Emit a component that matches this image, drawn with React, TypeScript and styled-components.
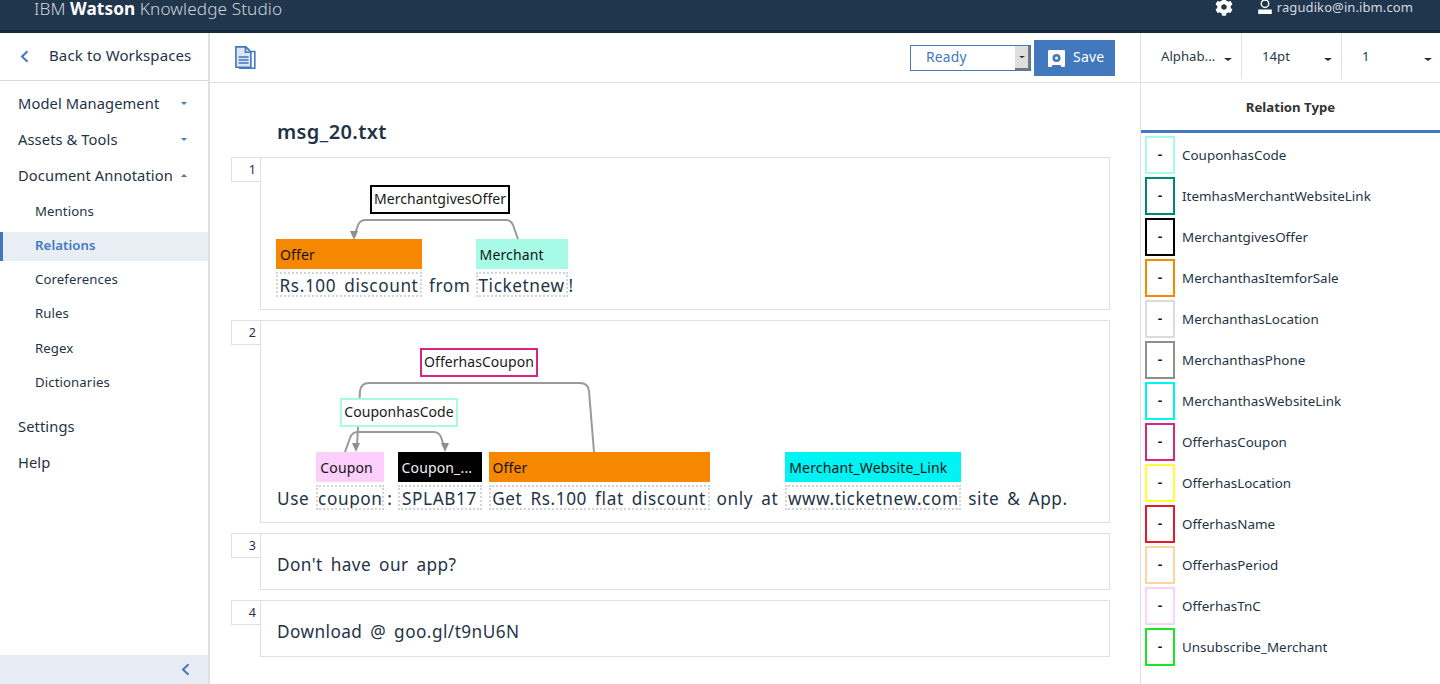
import React from "react";
import styled, { createGlobalStyle } from "styled-components";
import { FaCog } from "react-icons/fa";

const FONT = `"Noto Sans", "Open Sans", sans-serif`;
const INK = "#1f3346";
const LINE = "#e0e0e0";
const BLUE = "#4178be";

const Global = createGlobalStyle`
  html, body { margin: 0; padding: 0; height: 684px; overflow: hidden; background: #fff; }
  body { font-family: ${FONT}; color: ${INK}; }
  * { box-sizing: border-box; }
`;

const Page = styled.div`width: 1440px; height: 684px; display: flex; flex-direction: column; overflow: hidden;`;
const Header = styled.header`
  height: 33px; flex: none; background: #1f364d; border-bottom: 3px solid #15293a;
  display: flex; align-items: flex-start; justify-content: space-between; padding: 0 27px 0 34px; color: #ccd4dc;
`;
const Brand = styled.div`font-size: 17.2px; line-height: 18px; letter-spacing: 0.1px; font-weight: 300; b { font-weight: 700; color: #fff; }`;
const HeaderRight = styled.div`display: flex; align-items: center; height: 14px; color: #d4dae0; font-size: 13px; line-height: 14px; letter-spacing: 0.1px;`;
const GearSlot = styled.span`display: flex; margin-right: 25px; color: #fff;`;
const UserSlot = styled.span`display: flex; margin-right: 5px; color: #fff;`;

const Body = styled.div`flex: 1; display: flex; min-height: 0;`;
const Sidebar = styled.nav`width: 210px; flex: none; border-right: 2px solid ${LINE}; display: flex; flex-direction: column;`;
const BackRow = styled.div`height: 48px; flex: none; border-bottom: 1px solid #d8d8d8; display: flex; align-items: center; padding: 0 0 4px 20px; font-size: 15px; gap: 20px; letter-spacing: 0.12px;`;
const BackIcon = styled.span`display: flex; margin-top: 4px;`;
const NavList = styled.div`flex: 1; padding-top: 4px;`;
const TopItem = styled.div<{ $mt?: number }>`
  height: 36px; margin-top: ${(p) => p.$mt ?? 0}px; display: flex; align-items: center; justify-content: space-between;
  padding: 0 21px 0 18px; font-size: 14.7px; letter-spacing: 0.1px;
`;
const SubList = styled.div`margin-top: 1px;`;
const SubItem = styled.div<{ $active?: boolean }>`
  height: 34.3px; display: flex; align-items: center; padding-left: ${(p) => (p.$active ? 32 : 35)}px; font-size: 13.2px; letter-spacing: 0.1px;
  ${(p) => p.$active && `background: #e9eef5; border-left: 3px solid ${BLUE}; color: ${BLUE}; font-weight: 600; height: 29px; margin: 3.7px 0 1px; padding-bottom: 3px;`}
`;
const Caret = styled.span<{ $up?: boolean; $dark?: boolean; $size?: number; $down?: number }>`
  width: 0; height: 0; flex: none; margin-top: ${(p) => p.$down ?? 0}px;
  border-left: ${(p) => p.$size ?? 3.5}px solid transparent; border-right: ${(p) => p.$size ?? 3.5}px solid transparent;
  ${(p) => (p.$up ? "border-bottom" : "border-top")}: ${(p) => (p.$size ?? 3.5) - 0.5}px solid ${(p) => (p.$dark ? "#1f2b36" : BLUE)};
`;
const CollapseBar = styled.div`height: 29px; flex: none; background: #e8edf5; display: flex; align-items: center; justify-content: flex-end; padding-right: 18px;`;

const Main = styled.main`width: 931px; flex: none; border-right: 1px solid ${LINE}; display: flex; flex-direction: column; min-height: 0;`;
const Toolbar = styled.div`height: 50px; flex: none; border-bottom: 1px solid ${LINE}; display: flex; align-items: center; padding: 1px 25px 0 25px;`;
const Spacer = styled.div`flex: 1;`;
const StatusSelect = styled.div`
  width: 121px; height: 26px; border: 1px solid ${BLUE}; color: ${BLUE}; font-size: 13.8px; display: flex; align-items: center; padding: 0 0 3px 15px; position: relative; letter-spacing: 0.2px;
`;
const SelectArrow = styled.span`
  position: absolute; right: 0; top: 0; bottom: 0; width: 15px; background: #dedede; border-right: 2px solid #777; border-bottom: 2px solid #777;
  display: flex; align-items: center; justify-content: center;
`;
const SaveButton = styled.div`
  width: 81px; height: 36px; margin-left: 3px; background: ${BLUE}; color: #fff; font-size: 14px; display: flex; align-items: center; gap: 8px; padding-left: 14px; letter-spacing: 0.2px;
`;
const SaveLabel = styled.span`margin-top: -3px;`;
const Doc = styled.div`flex: 1; min-height: 0; padding: 36px 30px 0 21px;`;
const DocTitle = styled.h1`margin: 0 0 9px 46px; font-size: 20px; line-height: 26px; font-weight: 600; height: 29px; letter-spacing: 0.4px;`;
const Sentences = styled.div`display: flex; flex-direction: column; gap: 10px;`;
const SentenceRow = styled.section`display: flex; align-items: flex-start;`;
const LineNumber = styled.div`
  width: 29px; height: 25px; flex: none; border: 1px solid ${LINE}; border-right: none; font-size: 12.5px; text-align: right; padding: 3px 4px 0 0; line-height: 18px;
`;
const SentenceBody = styled.div`flex: 1; border: 1px solid ${LINE}; padding: 0 15px 12px; min-width: 0;`;
const ArcStage = styled.div<{ $h: number }>`height: ${(p) => p.$h}px; position: relative; margin: 0 -15px;`;
const ArcSvg = styled.svg`position: absolute; inset: 0; width: 100%; height: 100%; overflow: visible;`;
const RelationTag = styled.div<{ $x: number; $y: number; $w: number; $c: string }>`
  position: absolute; left: ${(p) => p.$x}px; top: ${(p) => p.$y}px; width: ${(p) => p.$w}px; height: 29px; background: #fff; padding-bottom: 2px;
  border: 2px solid ${(p) => p.$c}; font-size: 14px; letter-spacing: 0.05px; color: #1a1a1a; display: flex; align-items: center; justify-content: center; white-space: nowrap;
`;
const TokenLine = styled.div`display: flex; align-items: flex-end; font-size: 17.2px; letter-spacing: 0.6px; word-spacing: 3px; white-space: nowrap;`;
const Word = styled.span<{ $ml?: number }>`margin-left: ${(p) => p.$ml ?? 0}px; height: 25px; line-height: 27px; display: block;`;
const Token = styled.div<{ $ml?: number; $w: number }>`width: ${(p) => p.$w}px; margin-left: ${(p) => p.$ml ?? 0}px; flex: none; display: flex; flex-direction: column;`;
const EntityLabel = styled.div<{ $bg: string; $fg?: string }>`
  height: 30px; background: ${(p) => p.$bg}; color: ${(p) => p.$fg ?? "#141414"}; font-size: 14px; letter-spacing: 0.15px; word-spacing: 0; display: flex; align-items: center; padding: 1px 0 0 4px; margin-bottom: 3px; overflow: hidden;
`;
const Annotated = styled.div`height: 25px; line-height: 23px; border: 2px dotted #d4d4d4; display: flex; justify-content: center; overflow: hidden;`;
const PlainBody = styled.div`flex: 1; height: 57px; border: 1px solid ${LINE}; padding: 6px 0 0 16px; display: flex; align-items: center; font-size: 17.2px; letter-spacing: 0.45px; word-spacing: 3px;`;

const RightPanel = styled.aside`width: 299px; flex: none; display: flex; flex-direction: column;`;
const ControlBar = styled.div`height: 50px; flex: none; border-bottom: 1px solid ${LINE}; display: flex; padding-bottom: 3px; font-size: 13.2px; color: #2a3a48;`;
const ControlCell = styled.div<{ $w: number; $pad: number }>`
  width: ${(p) => p.$w}px; flex: none; border-right: 1px solid ${LINE}; display: flex; align-items: center; justify-content: space-between; padding: 0 ${(p) => p.$pad}px 0 20px;
  &:last-child { border-right: none; }
`;
const PanelTitle = styled.div`height: 50px; flex: none; border-bottom: 3px solid ${BLUE}; font-size: 13.2px; font-weight: 700; color: #333; display: flex; align-items: center; justify-content: center;`;
const TypeList = styled.div`padding: 3px 0 0 4px; display: flex; flex-direction: column; gap: 3px;`;
const TypeRow = styled.div`display: flex; align-items: center; height: 38px; gap: 7px;`;
const TypeKey = styled.div<{ $c: string }>`width: 30px; height: 38px; flex: none; border: 2px solid ${(p) => p.$c}; display: flex; align-items: center; justify-content: center; font-size: 14px; font-weight: 600; color: #111; padding-bottom: 3px;`;
const TypeName = styled.div`font-size: 13.4px; letter-spacing: 0.03px; padding-bottom: 1px;`;

const TYPES: [string, string][] = [
  ["CouponhasCode", "#a7fbe6"], ["ItemhasMerchantWebsiteLink", "#00877a"], ["MerchantgivesOffer", "#000000"],
  ["MerchanthasItemforSale", "#f58800"], ["MerchanthasLocation", "#dcdcdc"], ["MerchanthasPhone", "#8e8e8e"],
  ["MerchanthasWebsiteLink", "#00f3f3"], ["OfferhasCoupon", "#d9257f"], ["OfferhasLocation", "#ffff33"],
  ["OfferhasName", "#e5172f"], ["OfferhasPeriod", "#fdd5a3"], ["OfferhasTnC", "#fbd3fb"], ["Unsubscribe_Merchant", "#1ee61e"],
];

const Chevron = () => (
  <svg width="9" height="13" viewBox="0 0 9 13" fill="none" stroke={BLUE} strokeWidth="2"><path d="M7.5 1.2 2 6.5l5.5 5.3" /></svg>
);
const DocIcon = () => (
  <svg width="21" height="24" viewBox="0 0 21 24" fill="none" stroke={BLUE} strokeWidth="1.6">
    <path d="M4 22.2h15.8V5.5H16" />
    <path d="M.9.9h10l5 5v15.4H.9z" fill="#dbe6f4" />
    <path d="M10.5 1v5.3h5.3" />
    <path d="M3.6 11h10M3.6 14h10M3.6 17h10" strokeWidth="1.4" />
  </svg>
);
const SaveIcon = () => (
  <svg width="17" height="17" viewBox="0 0 17 17"><path fillRule="evenodd" fill="#fff" d="M1 0h15a1 1 0 0 1 1 1v15a1 1 0 0 1-1 1h-2.5l-1-2h-8l-1 2H1a1 1 0 0 1-1-1V1a1 1 0 0 1 1-1Zm7.5 4a4 4 0 1 0 0 8 4 4 0 0 0 0-8Zm0 2.5a1.5 1.5 0 1 1 0 3 1.5 1.5 0 0 1 0-3Z" /></svg>
);
const UserIcon = () => (
  <svg width="14" height="16" viewBox="0 0 15 16" fill="none" stroke="#fff" strokeWidth="1.5"><circle cx="7.5" cy="4.5" r="4" /><path d="M1 11.5h13v3.2H1z" fill="#fff" /></svg>
);
const Arc = ({ d }: { d: string }) => <path d={d} fill="none" stroke="#9a9a9a" strokeWidth="2" />;
const Arrow = ({ x, y }: { x: number; y: number }) => <path d={`M${x} ${y}l-4-9h8z`} fill="#8f8f8f" />;

export default function App() {
  return (
    <Page>
      <Global />
      <Header>
        <Brand>IBM <b>Watson</b> Knowledge Studio</Brand>
        <HeaderRight>
          <GearSlot><FaCog size={18} /></GearSlot>
          <UserSlot><UserIcon /></UserSlot>
          ragudiko@in.ibm.com
        </HeaderRight>
      </Header>
      <Body>
        <Sidebar>
          <BackRow><BackIcon><Chevron /></BackIcon>Back to Workspaces</BackRow>
          <NavList>
            <TopItem>Model Management<Caret /></TopItem>
            <TopItem>Assets &amp; Tools<Caret /></TopItem>
            <TopItem>Document Annotation<Caret $up /></TopItem>
            <SubList>
              <SubItem>Mentions</SubItem>
              <SubItem $active>Relations</SubItem>
              <SubItem>Coreferences</SubItem>
              <SubItem>Rules</SubItem>
              <SubItem>Regex</SubItem>
              <SubItem>Dictionaries</SubItem>
            </SubList>
            <TopItem $mt={9}>Settings</TopItem>
            <TopItem>Help</TopItem>
          </NavList>
          <CollapseBar><Chevron /></CollapseBar>
        </Sidebar>
        <Main>
          <Toolbar>
            <DocIcon />
            <Spacer />
            <StatusSelect>Ready<SelectArrow><Caret $dark $size={3} /></SelectArrow></StatusSelect>
            <SaveButton><SaveIcon /><SaveLabel>Save</SaveLabel></SaveButton>
          </Toolbar>
          <Doc>
            <DocTitle>msg_20.txt</DocTitle>
            <Sentences>
              <SentenceRow>
                <LineNumber>1</LineNumber>
                <SentenceBody>
                  <ArcStage $h={81}>
                    <ArcSvg>
                      <Arc d="M257 81 L252 67 Q250 62 245 62 L105 62 Q99 62 97 67 L94 76" />
                      <Arrow x={93} y={82} />
                    </ArcSvg>
                    <RelationTag $x={109} $y={27} $w={140} $c="#000">MerchantgivesOffer</RelationTag>
                  </ArcStage>
                  <TokenLine>
                    <Token $w={146}><EntityLabel $bg="#f58800">Offer</EntityLabel><Annotated>Rs.100 discount</Annotated></Token>
                    <Word $ml={7}>from</Word>
                    <Token $ml={5} $w={92}><EntityLabel $bg="#a7fbe6">Merchant</EntityLabel><Annotated>Ticketnew</Annotated></Token>
                    <Word $ml={1}>!</Word>
                  </TokenLine>
                </SentenceBody>
              </SentenceRow>
              <SentenceRow>
                <LineNumber>2</LineNumber>
                <SentenceBody>
                  <ArcStage $h={131}>
                    <ArcSvg>
                      <Arc d="M333 131 L328 70 Q327 62 319 62 L108 62 Q100 62 99 70 L96 125" />
                      <Arrow x={95} y={131} />
                      <Arc d="M84 131 L89 117 Q91 111 97 111 L172 111 Q178 111 180 116 L183 125" />
                      <Arrow x={184} y={131} />
                    </ArcSvg>
                    <RelationTag $x={159} $y={27} $w={118} $c="#d9257f">OfferhasCoupon</RelationTag>
                    <RelationTag $x={79} $y={77} $w={118} $c="#a7fbe6">CouponhasCode</RelationTag>
                  </ArcStage>
                  <TokenLine>
                    <Word $ml={1}>Use</Word>
                    <Token $ml={7} $w={68}><EntityLabel $bg="#fccffc">Coupon</EntityLabel><Annotated>coupon</Annotated></Token>
                    <Word $ml={3}>:</Word>
                    <Token $ml={5} $w={84}><EntityLabel $bg="#000" $fg="#f0f0f0">Coupon_...</EntityLabel><Annotated>SPLAB17</Annotated></Token>
                    <Token $ml={7} $w={221}><EntityLabel $bg="#f58800">Offer</EntityLabel><Annotated>Get Rs.100 flat discount</Annotated></Token>
                    <Word $ml={7}>only at</Word>
                    <Token $ml={7} $w={176}><EntityLabel $bg="#00f3f3">Merchant_Website_Link</EntityLabel><Annotated>www.ticketnew.com</Annotated></Token>
                    <Word $ml={7}>site &amp; App.</Word>
                  </TokenLine>
                </SentenceBody>
              </SentenceRow>
              <SentenceRow>
                <LineNumber>3</LineNumber>
                <PlainBody>Don't have our app?</PlainBody>
              </SentenceRow>
              <SentenceRow>
                <LineNumber>4</LineNumber>
                <PlainBody>Download @ goo.gl/t9nU6N</PlainBody>
              </SentenceRow>
            </Sentences>
          </Doc>
        </Main>
        <RightPanel>
          <ControlBar>
            <ControlCell $w={101} $pad={9}>Alphab...<Caret $dark $size={4} $down={6} /></ControlCell>
            <ControlCell $w={100} $pad={9}>14pt<Caret $dark $size={4} $down={6} /></ControlCell>
            <ControlCell $w={98} $pad={8}>1<Caret $dark $size={4} $down={6} /></ControlCell>
          </ControlBar>
          <PanelTitle>Relation Type</PanelTitle>
          <TypeList>
            {TYPES.map(([name, color]) => (
              <TypeRow key={name}>
                <TypeKey $c={color}>-</TypeKey>
                <TypeName>{name}</TypeName>
              </TypeRow>
            ))}
          </TypeList>
        </RightPanel>
      </Body>
    </Page>
  );
}
